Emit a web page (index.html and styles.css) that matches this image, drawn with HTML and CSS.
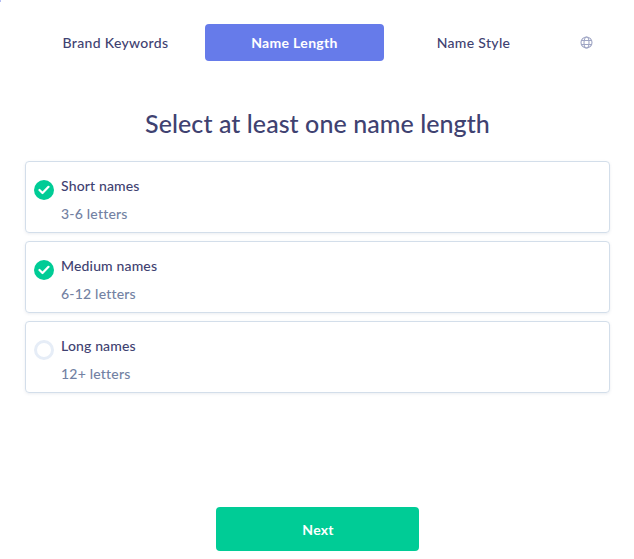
FILE: index.html
```html
<!DOCTYPE html>
<html lang="en">
<head>
  <meta charset="UTF-8" />
  <title>Name Generator</title>
  <link rel="stylesheet" href="styles.css">
</head>
<body>
  <div class="wizard">
    <nav class="tabs">
      <a class="tab">Brand Keywords</a>
      <a class="tab active">Name Length</a>
      <a class="tab">Name Style</a>
      <span class="lang">
        <svg width="13" height="13" viewBox="0 0 13 13" fill="none" stroke="#9fa5c4" stroke-width="1.1">
          <circle cx="6.5" cy="6.5" r="5.5"/>
          <ellipse cx="6.5" cy="6.5" rx="2.5" ry="5.5"/>
          <path d="M1.2 4.5h10.6M1.2 8.5h10.6"/>
        </svg>
      </span>
    </nav>

    <h1 class="title">Select at least one name length</h1>

    <div class="options">
      <div class="option">
        <span class="check on">
          <svg width="12" height="10" viewBox="0 0 12 10" fill="none" stroke="#fff" stroke-width="2.2" stroke-linecap="round" stroke-linejoin="round">
            <path d="M1.5 5l3 3 6-6.2"/>
          </svg>
        </span>
        <div class="option-text">
          <div class="option-name">Short names</div>
          <div class="option-sub">3-6 letters</div>
        </div>
      </div>
      <div class="option">
        <span class="check on">
          <svg width="12" height="10" viewBox="0 0 12 10" fill="none" stroke="#fff" stroke-width="2.2" stroke-linecap="round" stroke-linejoin="round">
            <path d="M1.5 5l3 3 6-6.2"/>
          </svg>
        </span>
        <div class="option-text">
          <div class="option-name">Medium names</div>
          <div class="option-sub">6-12 letters</div>
        </div>
      </div>
      <div class="option">
        <span class="check"></span>
        <div class="option-text">
          <div class="option-name">Long names</div>
          <div class="option-sub">12+ letters</div>
        </div>
      </div>
    </div>

    <div class="footer">
      <button class="next-btn">Next</button>
    </div>
  </div>
</body>
</html>
```

FILE: styles.css
```css
body {
  margin: 0;
  font-family: "Lato", "Noto Sans", sans-serif;
  background: #fff;
  color: #3f4271;
}

/* sliver of the page's progress marker, top left corner */
body::before {
  content: "";
  position: absolute;
  top: 0;
  left: 0;
  width: 1px;
  height: 2px;
  background: #b3bdf4;
}

.wizard {
  height: 559px;
  box-sizing: border-box;
  padding: 24px 24px 8px 25px;
  display: flex;
  flex-direction: column;
}

.tabs {
  display: flex;
  align-items: center;
  padding-left: 1px;
}

.tab {
  width: 179px;
  height: 37px;
  line-height: 37px;
  text-align: center;
  font-size: 14px;
  font-weight: 500;
  letter-spacing: 0.33px;
  border-radius: 4px;
  color: #3f4271;
}

.tab.active {
  background: #667bea;
  color: #fff;
  font-weight: 700;
}

.lang {
  flex: 1;
  display: flex;
  justify-content: center;
}

.title {
  margin: 45px 0 21px;
  text-align: center;
  font-size: 25px;
  line-height: 34px;
  font-weight: 500;
  letter-spacing: 0.07px;
  color: #3f4271;
}

.options {
  display: flex;
  flex-direction: column;
  gap: 8px;
}

.option {
  height: 72px;
  box-sizing: border-box;
  border: 1px solid #d3deea;
  border-radius: 4px;
  box-shadow: 0 1px 3px rgba(60, 80, 120, 0.1);
  padding: 0 8px;
  display: flex;
  align-items: flex-start;
  gap: 7px;
}

.check {
  margin-top: 18px;
  width: 20px;
  height: 20px;
  box-sizing: border-box;
  border-radius: 50%;
  border: 3px solid #e6edf7;
  display: flex;
  align-items: center;
  justify-content: center;
  flex: none;
}

.check.on {
  background: #00cc96;
  border: none;
}

.option-name {
  margin-top: 14px;
  font-size: 14px;
  line-height: 20px;
  font-weight: 500;
  letter-spacing: 0.15px;
  color: #3f4271;
}

.option-sub {
  margin-top: 8px;
  font-size: 14px;
  line-height: 20px;
  font-weight: 500;
  letter-spacing: 0.2px;
  color: #7382a3;
}

.footer {
  margin-top: auto;
  display: flex;
  justify-content: center;
  padding-right: 1px;
}

.next-btn {
  width: 203px;
  height: 44px;
  padding: 0 0 0 2px;
  border: none;
  border-radius: 4px;
  background: #00cc96;
  color: #fff;
  font-family: inherit;
  font-size: 14px;
  font-weight: 700;
  letter-spacing: 0.2px;
}
```
